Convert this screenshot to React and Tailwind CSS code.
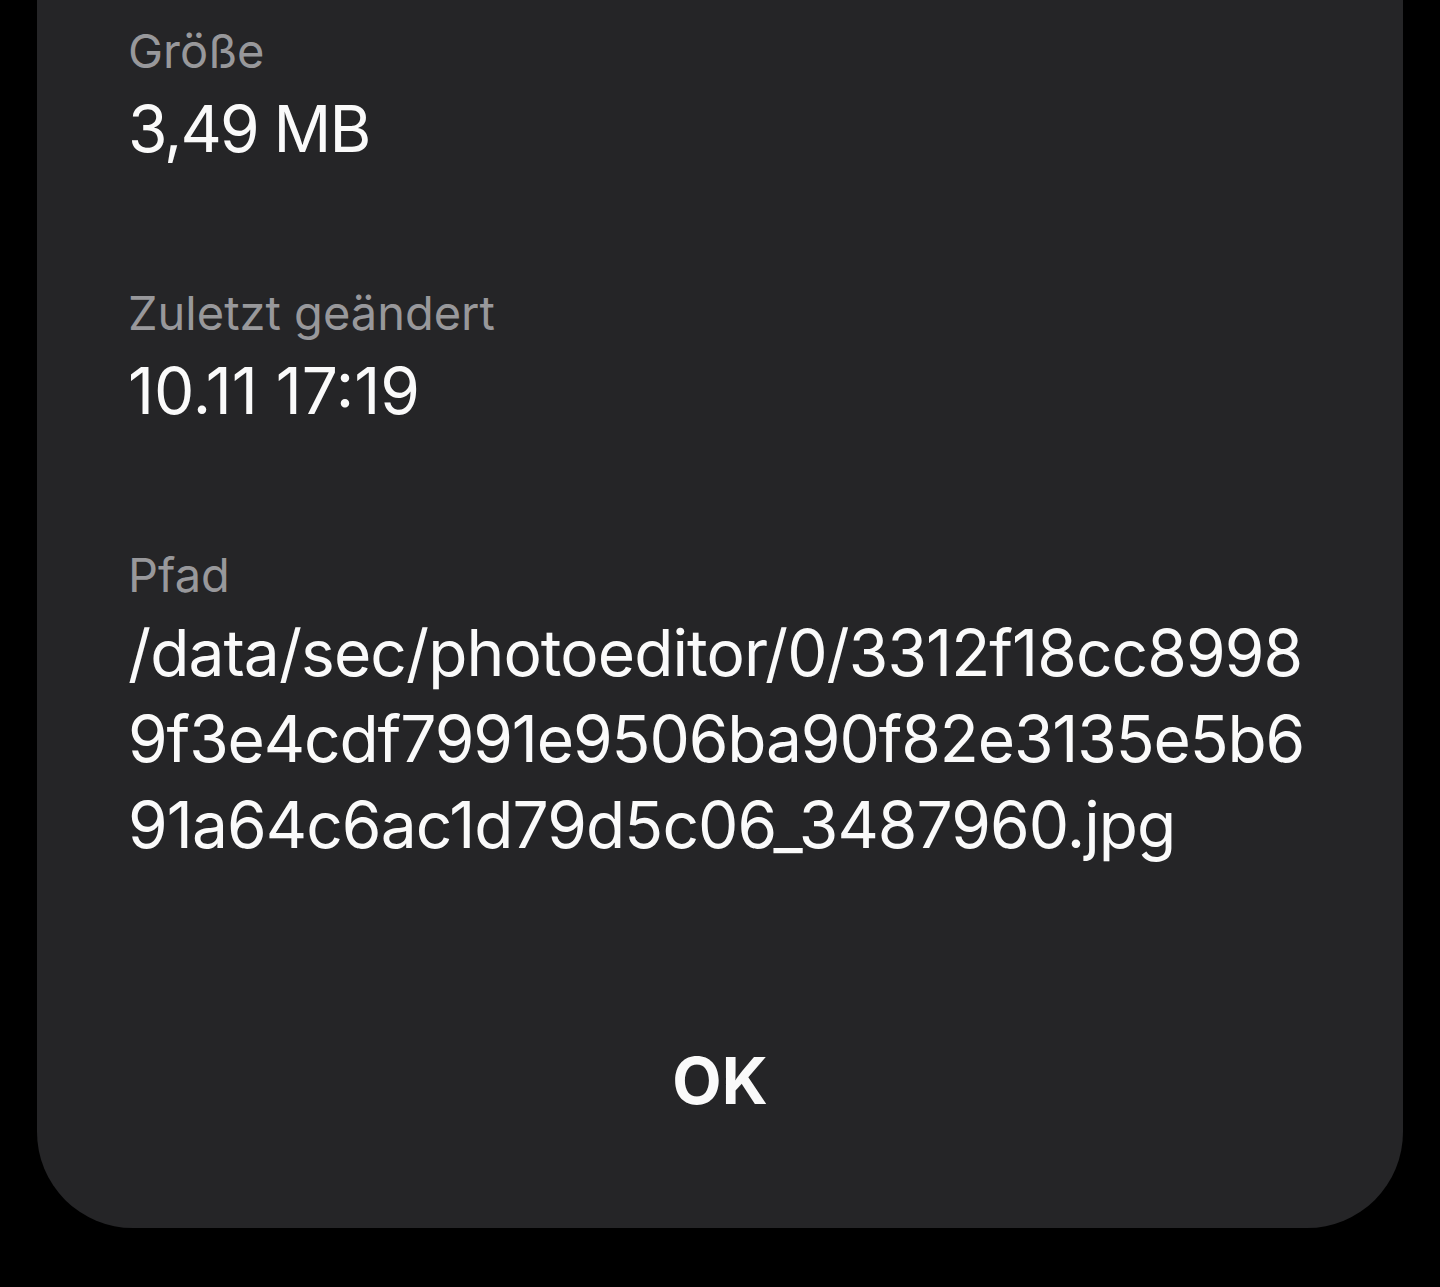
import React from 'react';

function InfoRow({ label, children, className = '' }) {
  return (
    <div className={className}>
      <div className="text-[47px] leading-[56px] text-[#98989b]">{label}</div>
      <div className="mt-[7px] text-[64px] leading-[86px] tracking-[-0.9px] text-[#fafafa]">{children}</div>
    </div>
  );
}

function App() {
  return (
    <div className="min-h-screen bg-black font-['Inter','Noto_Sans',sans-serif]">
      <div className="mx-[37px] h-[1228px] rounded-b-[96px] bg-[#252527] px-[91px] pt-[23px] flex flex-col">
        <InfoRow label="Größe">
          <span className="tracking-[-2px]">3,49 MB</span>
        </InfoRow>
        <InfoRow label="Zuletzt geändert" className="mt-[113px]">
          <span className="tracking-normal">10.11 17:19</span>
        </InfoRow>
        <InfoRow label="Pfad" className="mt-[113px]">
          <span className="block whitespace-nowrap">/data/sec/photoeditor/0/3312f18cc8998</span>
          <span className="block whitespace-nowrap tracking-[-1.1px]">9f3e4cdf7991e9506ba90f82e3135e5b6</span>
          <span className="block whitespace-nowrap">91a64c6ac1d79d5c06_3487960.jpg</span>
        </InfoRow>
        <button className="mt-[170px] self-center text-[64px] leading-[86px] font-bold text-[#fafafa]">
          OK
        </button>
      </div>
    </div>
  );
}

export default App;
